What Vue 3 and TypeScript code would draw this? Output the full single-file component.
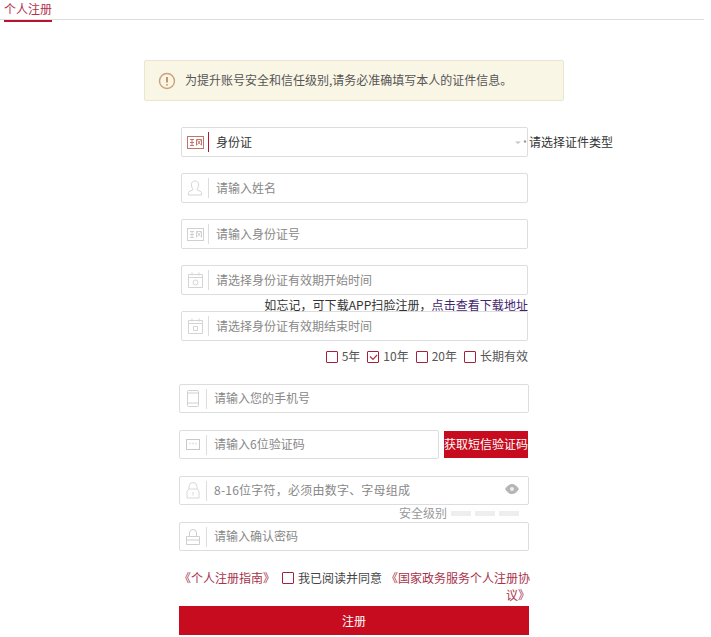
<script setup lang="ts">
const years = [
  { label: '5年', checked: false },
  { label: '10年', checked: true },
  { label: '20年', checked: false },
  { label: '长期有效', checked: false },
]
</script>

<template>
  <div class="page">
    <div class="tabs"><span class="tab">个人注册</span></div>

    <div class="notice">
      <svg class="notice-icon" width="18" height="18" viewBox="0 0 18 18" fill="none">
        <circle cx="9" cy="9" r="7.5" stroke="#c9a27c" stroke-width="1.4" />
        <path d="M9 5v5.500M9 12.200v1.300" stroke="#c0703f" stroke-width="1.5" />
      </svg>
      <span class="lift">为提升账号安全和信任级别,请务必准确填写本人的证件信息。</span>
    </div>

    <div class="form">
      <div class="group narrow first">
        <div class="field">
          <span class="ico">
            <svg width="17" height="13" viewBox="0 0 17 13" fill="none" stroke="#c0746a">
              <rect x=".5" y=".5" width="16" height="12" />
              <path d="M3 3.500h4M5 3.500v6M3 9.500h4M3 6.500h4M9.500 9.500v-6h5v6M10.500 4.500l3 4M13.500 4.500l-3 4" />
            </svg>
          </span>
          <i class="sep active"></i>
          <span class="value lift">身份证</span>
          <svg class="arrow" width="12" height="6" viewBox="0 0 12 6">
            <path d="M0 1.500h6l-3 2.500z" fill="#c4c4c4" />
            <circle cx="10" cy="1.500" r="1.200" fill="#999" />
          </svg>
          <span class="type-hint">请选择证件类型</span>
        </div>
      </div>

      <div class="group narrow">
        <div class="field">
          <span class="ico">
            <svg width="14" height="16" viewBox="0 0 14 16" fill="none" stroke="#d4d4d4">
              <path d="M7 1a3.600 3.600 0 0 1 3.600 3.800c0 2-1 3.400-1.600 4l.3 1.200 3.600 1.600c.4.300.6.800.6 1.200V15H.5v-2.200c0-.4.200-.9.600-1.200l3.600-1.600.3-1.200c-.6-.6-1.600-2-1.600-4A3.600 3.600 0 0 1 7 1z" />
            </svg>
          </span>
          <i class="sep"></i>
          <span class="ph lift">请输入姓名</span>
        </div>
      </div>

      <div class="group narrow">
        <div class="field">
          <span class="ico">
            <svg width="17" height="13" viewBox="0 0 17 13" fill="none" stroke="#d0d0d0">
              <rect x=".5" y=".5" width="16" height="12" />
              <path d="M3 3.500h4M5 3.500v6M3 9.500h4M3 6.500h4M9.500 9.500v-6h5v6M10.500 4.500l3 4M13.500 4.500l-3 4" />
            </svg>
          </span>
          <i class="sep"></i>
          <span class="ph lift">请输入身份证号</span>
        </div>
      </div>

      <div class="group narrow">
        <div class="field">
          <span class="ico">
            <svg width="15" height="16" viewBox="0 0 15 16" fill="none" stroke="#d4d4d4">
              <path d="M.5 2.500h14v13H.5zM.5 5.500h14M4 .5v3M11 .5v3" />
              <circle cx="7.500" cy="10.500" r="2.500" />
            </svg>
          </span>
          <i class="sep"></i>
          <span class="ph lift">请选择身份证有效期开始时间</span>
        </div>
      </div>

      <div class="group narrow">
        <p class="scan-hint">如忘记，可下载APP扫脸注册，<a class="scan-link">点击查看下载地址</a></p>
        <div class="field">
          <span class="ico">
            <svg width="15" height="16" viewBox="0 0 15 16" fill="none" stroke="#d4d4d4">
              <path d="M.5 2.500h14v13H.5zM.5 5.500h14M4 .5v3M11 .5v3M5.500 8.500h4v4h-4z" />
            </svg>
          </span>
          <i class="sep"></i>
          <span class="ph lift">请选择身份证有效期结束时间</span>
        </div>
      </div>

      <div class="years">
        <label v-for="y in years" :key="y.label" class="year">
          <span class="box">
            <svg v-if="y.checked" width="9" height="7" viewBox="0 0 9 7" fill="none" stroke="#b5304a">
              <path d="M1 2.500l3 3 4-4.500" stroke-width="1.2" />
            </svg>
          </span>
          <span class="lift">{{ y.label }}</span>
        </label>
      </div>

      <div class="group wide phone">
        <div class="field short">
          <span class="ico">
            <svg width="12" height="17" viewBox="0 0 12 17" fill="none" stroke="#d0d0d0">
              <rect x=".5" y=".5" width="11" height="16" rx="1" />
              <path d="M.5 13h11M.5 3h11" />
            </svg>
          </span>
          <i class="sep"></i>
          <span class="ph lift">请输入您的手机号</span>
        </div>
      </div>

      <div class="group wide code-row">
        <div class="field short code">
          <span class="ico">
            <svg width="14" height="11" viewBox="0 0 14 11" fill="none" stroke="#c8c8c8">
              <rect x=".5" y=".5" width="13" height="10" />
              <path d="M3.500 4.500h1M6.500 4.500h1M9.500 4.500h1" stroke-width="1.500" />
            </svg>
          </span>
          <i class="sep"></i>
          <span class="ph lift">请输入6位验证码</span>
        </div>
        <button class="sms" type="button">获取短信验证码</button>
      </div>

      <div class="group wide pwd">
        <div class="field short">
          <span class="ico">
            <svg width="14" height="17" viewBox="0 0 14 17" fill="none" stroke="#d8d8d8">
              <path d="M3 7V4.500a4 4 0 0 1 8 0V7M1 16V9l2-2h8l2 2v7z" />
              <path d="M7 10v3.500" />
            </svg>
          </span>
          <i class="sep"></i>
          <span class="ph lift">8-16位字符，必须由数字、字母组成</span>
          <svg class="eye" width="14" height="10" viewBox="0 0 14 10">
            <path d="M0 5c2-3 4.400-5 7-5s5 2 7 5c-2 3-4.400 5-7 5S2 8 0 5z" fill="#b5b5b5" />
            <circle cx="7" cy="5" r="2" fill="#eee" />
          </svg>
        </div>
      </div>

      <div class="level">
        <span class="lift">安全级别</span>
        <i></i><i></i><i></i>
      </div>

      <div class="group wide">
        <div class="field short">
          <span class="ico">
            <svg width="14" height="16" viewBox="0 0 14 16" fill="none" stroke="#cfcfcf">
              <path d="M3.500 7V4a3.500 3.500 0 0 1 7 0v3M.5 7.500h13v8H.5zM.5 11h13" />
            </svg>
          </span>
          <i class="sep"></i>
          <span class="ph lift">请输入确认密码</span>
        </div>
      </div>

      <div class="agree">
        <a class="guide">《个人注册指南》</a>
        <span class="box"></span>
        <span class="agree-text">我已阅读并同意</span>
        <a class="guide long">《国家政务服务个人注册协议》</a>
      </div>

      <button class="submit" type="button"><span class="lift">注册</span></button>
    </div>
  </div>
</template>

<style>
html, body { margin: 0; background: #fff; }
</style>

<style scoped>
.page {
  width: 711px;
  height: 637px;
  overflow: hidden;
  position: relative;
  font-family: "Noto Sans CJK SC", "Liberation Sans", sans-serif;
  font-size: 12px;
  color: #333;
}
.lift { padding-bottom: 2px; }
.tabs {
  height: 19px;
  border-bottom: 1px solid #ddd;
  width: 704px;
}
.tab {
  display: inline-block;
  margin-left: 4px;
  width: 48px;
  height: 19px;
  line-height: 15px;
  color: #b2324c;
  border-bottom: 2px solid #b7142f;
  box-sizing: content-box;
  white-space: nowrap;
}
.notice {
  margin: 40px 0 0 144px;
  width: 405px;
  height: 39px;
  border: 1px solid #e9e6cf;
  border-radius: 2px;
  background: #faf6e6;
  display: flex;
  align-items: center;
  gap: 9px;
  padding-left: 13px;
  box-sizing: content-box;
  color: #555;
  white-space: nowrap;
}
.notice-icon { flex: none; }
.form {
  margin-left: 179px;
  width: 350px;
  margin-top: 26px;
  display: flex;
  flex-direction: column;
}
.group { position: relative; }
.narrow { margin: 16px 1px 0 2px; }
.first { margin-top: 0; }
.wide { margin-top: 17px; }
.field {
  position: relative;
  display: flex;
  align-items: center;
  height: 28px;
  border: 1px solid #ddd;
  border-radius: 2px;
  background: #fff;
  box-sizing: content-box;
  white-space: nowrap;
}
.field.short { height: 27px; }
.ico {
  flex: none;
  width: 26px;
  display: flex;
  justify-content: center;
}
.sep {
  flex: none;
  width: 1px;
  height: 20px;
  background: #ddd;
  margin-right: 7px;
}
.sep.active { background: #b7142f; }
.ph { color: #888; }
.value { color: #333; }
.arrow {
  position: absolute;
  right: 0;
  top: 12px;
}
.type-hint {
  position: absolute;
  left: 347px;
  top: 5px;
  color: #333;
}
.scan-hint {
  position: absolute;
  z-index: 1;
  right: 0;
  top: -14px;
  margin: 0;
  line-height: 16px;
  letter-spacing: 0.05px;
  white-space: nowrap;
  color: #333;
}
.scan-link { color: #41256e; }
.years {
  display: flex;
  justify-content: flex-end;
  gap: 7px;
  height: 16px;
  margin: 8px 1px 0 0;
  line-height: 16px;
  color: #555;
}
.year {
  display: flex;
  align-items: center;
  gap: 4px;
  white-space: nowrap;
}
.box {
  width: 10px;
  height: 10px;
  border: 1px solid #a3233f;
  border-radius: 1px;
  display: inline-flex;
  align-items: center;
  justify-content: center;
  flex: none;
}
.phone { margin-top: 19px; }
.code-row {
  display: flex;
  align-items: center;
  justify-content: space-between;
  padding-right: 1px;
}
.code { width: 258px; }
.sms {
  width: 84px;
  height: 27px;
  border: 0;
  padding: 0 0 2px;
  background: #c60c1e;
  color: #fff;
  font: inherit;
  white-space: nowrap;
  overflow: hidden;
}
.pwd .ph { letter-spacing: 0.23px; }
.eye { position: absolute; right: 9px; top: 7px; }
.level {
  display: flex;
  align-items: center;
  justify-content: flex-end;
  gap: 4px;
  height: 17px;
  margin-bottom: -17px;
  padding-right: 10px;
  color: #999;
  position: relative;
}
.level i {
  width: 20px;
  height: 5px;
  background: #eee;
}
.agree {
  margin-top: 18px;
  display: flex;
  align-items: flex-start;
  width: 352px;
  line-height: 17px;
  color: #444;
}
.guide { color: #a8324a; white-space: nowrap; flex: none; }
.agree .box { margin: 3px 4px 0 7px; }
.agree-text { white-space: nowrap; margin-right: 2px; flex: none; }
.guide.long { width: 146px; text-align: right; white-space: normal; }
.submit {
  margin-top: 3px;
  width: 350px;
  height: 29px;
  border: 0;
  padding: 0;
  background: #c60c1e;
  color: #fff;
  font: inherit;
}
</style>
